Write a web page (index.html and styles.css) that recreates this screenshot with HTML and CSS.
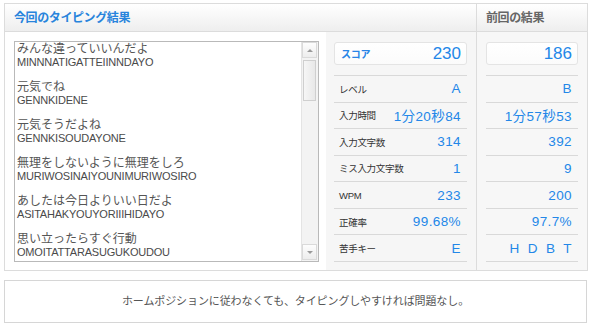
FILE: index.html
```html
<html lang="ja">
<head>
  <meta charset="UTF-8">
  <meta name="viewport" content="width=device-width, initial-scale=1.0">
  <title>タイピング結果</title>
  <link rel="stylesheet" href="styles.css">
</head>
<body>
  <div class="result">
    <section class="current">
      <h2 class="head head-current">今回のタイピング結果</h2>
      <div class="current-body">
        <div class="memo-wrap">
          <div class="memo">
            <div class="memo-text">
              <p>みんな違っていいんだよ<span>MINNNATIGATTEIINNDAYO</span></p>
              <p>元気でね<span>GENNKIDENE</span></p>
              <p>元気そうだよね<span>GENNKISOUDAYONE</span></p>
              <p>無理をしないように無理をしろ<span>MURIWOSINAIYOUNIMURIWOSIRO</span></p>
              <p>あしたは今日よりいい日だよ<span>ASITAHAKYOUYORIIIHIDAYO</span></p>
              <p>思い立ったらすぐ行動<span>OMOITATTARASUGUKOUDOU</span></p>
            </div>
            <div class="scrollbar">
              <span class="arrow up"></span>
              <span class="thumb"></span>
              <span class="track"></span>
              <span class="arrow down"></span>
            </div>
          </div>
        </div>
        <div class="stats">
          <div class="row score-row">
            <div class="score-box"><span class="label score-label">スコア</span><span class="score">230</span></div>
          </div>
          <div class="row"><span class="label">レベル</span><span class="value">A</span></div>
          <div class="row"><span class="label">入力時間</span><span class="value">1分20秒84</span></div>
          <div class="row"><span class="label">入力文字数</span><span class="value">314</span></div>
          <div class="row"><span class="label">ミス入力文字数</span><span class="value">1</span></div>
          <div class="row"><span class="label">WPM</span><span class="value">233</span></div>
          <div class="row"><span class="label">正確率</span><span class="value">99.68%</span></div>
          <div class="row"><span class="label">苦手キー</span><span class="value">E</span></div>
        </div>
      </div>
    </section>
    <section class="previous">
      <h2 class="head head-previous">前回の結果</h2>
      <div class="stats prev-stats">
        <div class="row score-row">
          <div class="score-box"><span class="score">186</span></div>
        </div>
        <div class="row"><span class="value">B</span></div>
        <div class="row"><span class="value">1分57秒53</span></div>
        <div class="row"><span class="value">392</span></div>
        <div class="row"><span class="value">9</span></div>
        <div class="row"><span class="value">200</span></div>
        <div class="row"><span class="value">97.7%</span></div>
        <div class="row"><span class="value keys">H D B T</span></div>
      </div>
    </section>
  </div>

  <div class="message">ホームポジションに従わなくても、タイピングしやすければ問題なし。</div>
</body>
</html>
```

FILE: styles.css
```css
body {
  font-family: "Liberation Sans", "Noto Sans CJK JP", sans-serif;
  margin: 0;
  padding: 0;
  background-color: #fff;
  color: #555;
}

.result {
  display: flex;
  width: 582px;
  margin: 3px 0 0 4px;
  border: 1px solid #dcdcdc;
}

.current {
  width: 471px;
  border-right: 1px solid #dcdcdc;
}

.previous {
  width: 110px;
  background: #f7f7f7;
}

.head {
  height: 27px;
  margin: 0;
  padding: 0 9px;
  border-bottom: 1px solid #dcdcdc;
  background: linear-gradient(#ffffff, #eeeeee);
  font-size: 12px;
  font-weight: bold;
  line-height: 28px;
  letter-spacing: -0.4px;
}

.head-current {
  color: #2884dc;
}

.head-previous {
  color: #666;
}

.current-body {
  display: flex;
  height: 238px;
}

.memo-wrap {
  width: 305px;
  padding: 9px 7px 0 9px;
  background: #fff;
}

.memo {
  display: flex;
  height: 219px;
  border: 1px solid #b9b9b9;
  background: #fff;
}

.memo-text {
  flex: 1;
  overflow: hidden;
  padding: 1px 0 0 2px;
  color: #555;
}

.memo-text p {
  margin: 0 0 12px;
  font-size: 12px;
  line-height: 13px;
  white-space: nowrap;
}

.memo-text span {
  display: block;
  font-size: 11px;
  line-height: 13px;
  letter-spacing: -0.2px;
  color: #4a4a4a;
}

.scrollbar {
  display: flex;
  flex-direction: column;
  width: 15px;
  padding: 0 1px 1px 0;
  border-left: 1px solid #e4e4e4;
  background: #f3f3f3;
}

.arrow {
  position: relative;
  height: 16px;
  border: 1px solid #dadada;
  box-sizing: border-box;
  background: linear-gradient(#fdfdfd, #ededed);
}

.arrow::after {
  content: "";
  position: absolute;
  left: 4px;
  top: 6px;
  border-left: 3px solid transparent;
  border-right: 3px solid transparent;
}

.arrow.up::after {
  border-bottom: 3px solid #9a9a9a;
}

.arrow.down::after {
  border-top: 3px solid #9a9a9a;
}

.thumb {
  height: 41px;
  margin: 2px 1px 0;
  border: 1px solid #cfcfcf;
  box-sizing: border-box;
  background: linear-gradient(90deg, #f6f6f6, #e8e8e8);
}

.track {
  flex: 1;
}

.stats {
  width: 133px;
  padding: 10px 9px 0 8px;
  background: #f6f6f6;
}

.prev-stats {
  width: 92px;
  padding: 10px 9px 0 9px;
  background: #f7f7f7;
}

.row {
  display: flex;
  align-items: center;
  justify-content: space-between;
  box-sizing: border-box;
  height: 26.57px;
  padding: 0 6px 0 5px;
  border-bottom: 1px solid #d9d9d9;
}

.prev-stats .row {
  justify-content: flex-end;
  padding-right: 6px;
}

.row.score-row {
  display: block;
  height: 34px;
  padding: 0 0 10px;
  border-bottom: 1px solid #d9d9d9;
}

.prev-stats .row.score-row {
  padding-right: 0;
}

.score-box {
  display: flex;
  align-items: center;
  justify-content: space-between;
  height: 23px;
  box-sizing: border-box;
  padding: 0 5px 0 6px;
  border: 1px solid #e4e4e4;
  border-radius: 3px;
  background: linear-gradient(#ffffff, #fbfbfb);
}

.prev-stats .score-box {
  justify-content: flex-end;
}

.label {
  font-size: 9.5px;
  color: #333;
  letter-spacing: -0.3px;
}

.score-label {
  color: #2884e6;
  font-weight: bold;
  font-size: 10px;
}

.score {
  font-size: 17px;
  color: #2387e8;
}

.value {
  font-size: 13.5px;
  color: #2387e8;
  letter-spacing: 0.4px;
}

.keys {
  word-spacing: 4px;
}

.message {
  width: 581px;
  height: 41px;
  margin: 9px 0 0 4px;
  border: 1px solid #d6d6d6;
  text-align: center;
  font-size: 11px;
  line-height: 41px;
  color: #555;
  letter-spacing: -0.1px;
}
```
